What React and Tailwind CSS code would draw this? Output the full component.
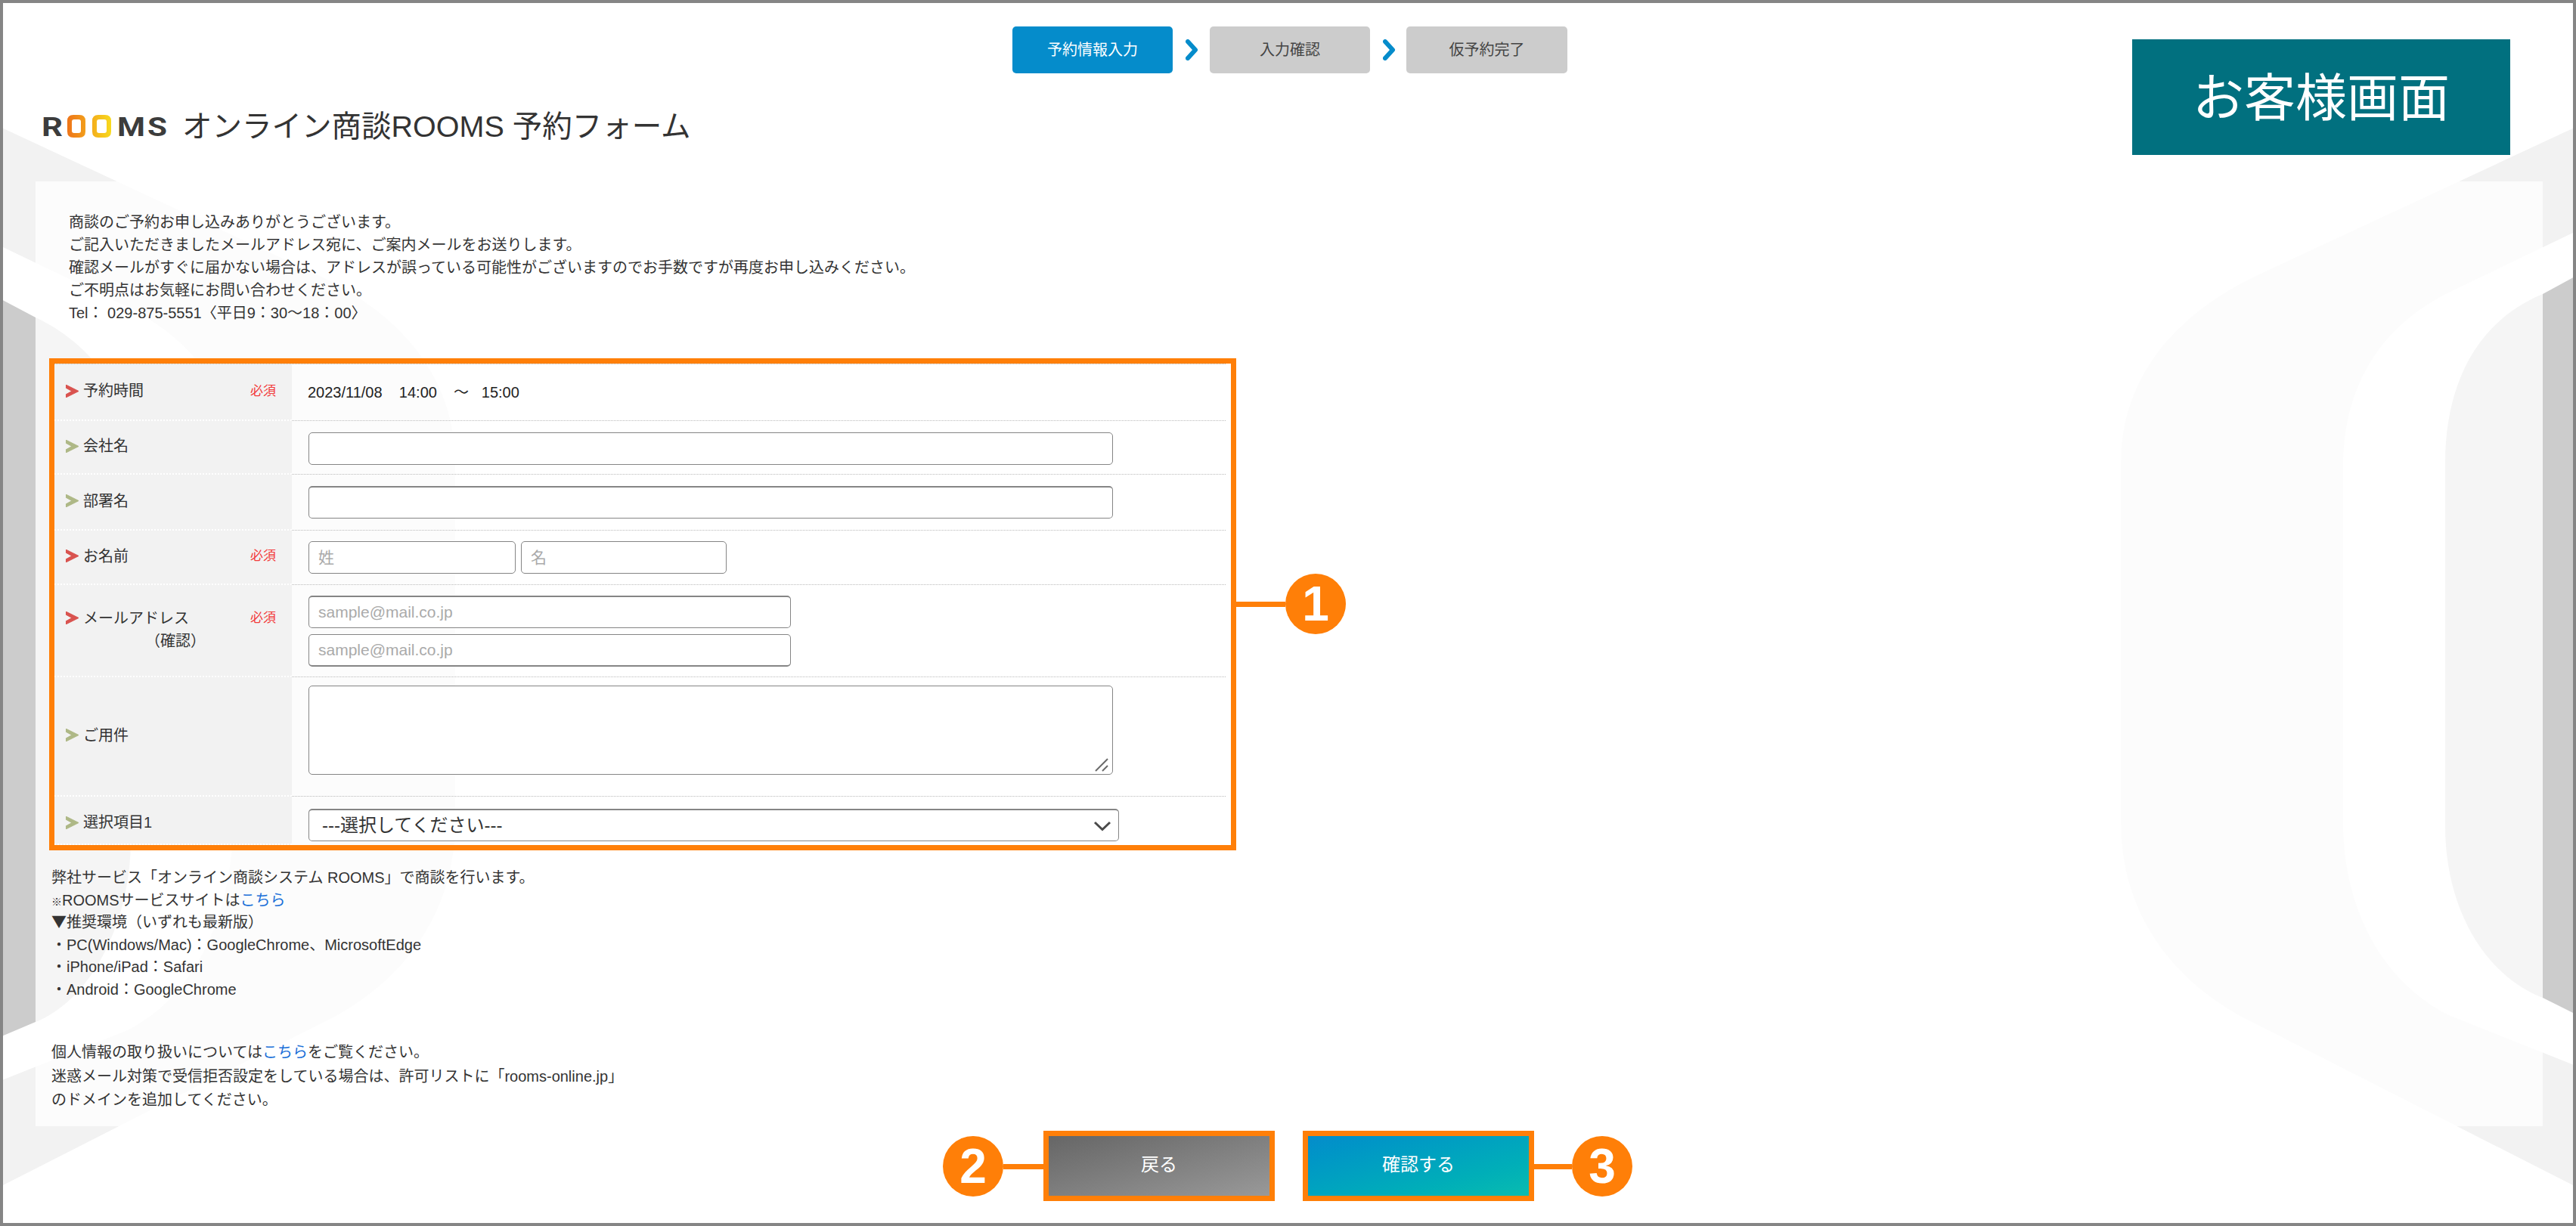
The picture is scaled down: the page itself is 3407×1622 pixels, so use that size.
import React from 'react';

const Chevron = ({ color }) => (
  <svg width="17" height="17" viewBox="0 0 17 17" className="shrink-0">
    <path d="M0 0 L17 8.5 L0 17 L0 13 L8 8.5 L0 4 Z" fill={color} stroke={color} strokeWidth="1" strokeLinejoin="round" />
  </svg>
);

const Required = () => <span className="ml-auto text-[17px] leading-none text-[#f23b3b]">必須</span>;

const Label = ({ children, required, className = '' }) => (
  <div className={`w-[314px] shrink-0 self-stretch bg-[#f2f2f2] border-b-2 border-dotted border-white flex flex-col justify-center pl-[15px] pr-[21px] pb-[3px] ${className}`}>
    <div className="flex items-center gap-[6px]">
      <Chevron color={required ? '#d9534f' : '#aeb886'} />
      <span>{children}</span>
      {required && <Required />}
    </div>
  </div>
);

const Field = ({ className = '', placeholder }) => (
  <input
    placeholder={placeholder}
    className={`h-[43px] border border-[#858585] rounded-[5px] bg-white px-[12px] text-[21px] placeholder:text-[#aaaaaa] ${className}`}
  />
);

const Callout = ({ n, className = '', line = 'w-[65px]', flip }) => (
  <div className={`absolute flex items-center ${flip ? 'flex-row-reverse' : ''} ${className}`}>
    <div className={`h-[7px] bg-[#ff7f08] ${line}`} />
    <div className="w-[80px] h-[80px] rounded-full bg-[#ff7f08] flex items-center justify-center text-white text-[64px] font-bold leading-none">
      {n}
    </div>
  </div>
);

const Background = () => (
  <svg className="absolute inset-0" width="3399" height="1614" viewBox="4 4 3399 1614">
    <path fill="#f2f2f2" d="M3407 168 L2990 362 C2865 420 2805 510 2805 612 L2805 1088 C2805 1200 2865 1300 2990 1358 L3407 1570 L3407 1410 L3241 1344 C3150 1300 3099 1200 3099 1088 L3099 617 C3099 510 3150 430 3241 386 L3407 306 Z" />
    <path fill="#cccccc" d="M3407 365 L3363 389 C3275 425 3234 510 3234 612 L3234 1093 C3234 1200 3285 1290 3363 1320 L3407 1342 Z" />
    {/* left side sits a little lower than the right one */}
    <g transform="translate(3407 0) scale(-1 1)">
      <path fill="#f2f2f2" d="M3407 168 L2990 362 C2865 420 2805 510 2805 612 L2805 1088 C2805 1200 2865 1300 2990 1358 L3407 1570 L3407 1430 L3241 1364 C3150 1320 3099 1210 3099 1088 L3099 617 C3099 520 3150 450 3241 405 L3407 325 Z" />
      <path fill="#cccccc" d="M3407 395 L3360 420 C3285 455 3234 525 3234 612 L3234 1110 C3234 1225 3290 1325 3360 1352 L3407 1372 Z" />
    </g>
  </svg>
);

const Logo = () => (
  <svg width="166" height="44" viewBox="0 -7 166 44" className="shrink-0 -my-[2px]">
    <defs>
      <linearGradient id="logo-o" gradientUnits="userSpaceOnUse" x1="34" y1="0" x2="92" y2="0">
        <stop offset="0" stopColor="#ee7419" />
        <stop offset="1" stopColor="#f8da1e" />
      </linearGradient>
    </defs>
    <g fill="#3c3c3c" fontFamily="Roboto, sans-serif" fontWeight="700" fontSize="35">
      <text x="0" y="28" textLength="28" lengthAdjust="spacingAndGlyphs">R</text>
      <text x="100" y="28" textLength="37" lengthAdjust="spacingAndGlyphs">M</text>
      <text x="140" y="28" textLength="26" lengthAdjust="spacingAndGlyphs">S</text>
    </g>
    <path
      fillRule="evenodd"
      fill="url(#logo-o)"
      d="M42 0 H50 Q58 0 58 8 V22 Q58 30 50 30 H42 Q34 30 34 22 V8 Q34 0 42 0 Z M43 6 Q40 6 40 9 V21 Q40 24 43 24 H49 Q52 24 52 21 V9 Q52 6 49 6 Z M75 0 H84 Q92 0 92 8 V22 Q92 30 84 30 H75 Q67 30 67 22 V8 Q67 0 75 0 Z M76 6 Q73 6 73 9 V21 Q73 24 76 24 H83 Q86 24 86 21 V9 Q86 6 83 6 Z"
    />
  </svg>
);

const App = () => {
  return (
    <div className="relative w-[3407px] h-[1622px] overflow-hidden border-4 border-[#858585] bg-white text-[20px] leading-[30px] text-[#333333] font-['Liberation_Sans','Noto_Sans_CJK_JP',sans-serif]">
      <Background />

      <div className="relative flex flex-col h-full">
        {/* header */}
        <div className="flex items-start h-[236px] shrink-0">
          <div className="pl-[51px]">
            <div className="flex items-center ml-[1284px] mt-[31px]">
              <div className="w-[212px] h-[62px] rounded-[5px] bg-[#058ccb] text-white flex items-center justify-center">予約情報入力</div>
              <svg width="18" height="28" viewBox="0 0 18 28" className="ml-[17px] mr-[14px]">
                <path d="M3 3 L13 14 L3 25" fill="none" stroke="#058ccb" strokeWidth="6" strokeLinecap="round" strokeLinejoin="round" />
              </svg>
              <div className="w-[212px] h-[62px] rounded-[5px] bg-[#cccccc] text-[#444444] flex items-center justify-center">入力確認</div>
              <svg width="18" height="28" viewBox="0 0 18 28" className="ml-[17px] mr-[13px]">
                <path d="M3 3 L13 14 L3 25" fill="none" stroke="#058ccb" strokeWidth="6" strokeLinecap="round" strokeLinejoin="round" />
              </svg>
              <div className="w-[213px] h-[62px] rounded-[5px] bg-[#cccccc] text-[#444444] flex items-center justify-center">仮予約完了</div>
            </div>
            <div className="flex items-center gap-[20px] mt-[50px]">
              <Logo />
              <h1 className="text-[39.5px] leading-[40px] text-[#333333]">オンライン商談ROOMS 予約フォーム</h1>
            </div>
          </div>
          <div className="ml-auto mr-[83px] mt-[48px] w-[500px] h-[153px] pt-[2px] bg-[#01707f] text-white text-[68px] flex items-center justify-center">
            お客様画面
          </div>
        </div>

        {/* panel */}
        <div className="ml-[43px] mr-[40px] h-[1250px] shrink-0 bg-white/80 pl-[18px] pt-[39px]">
          <div className="ml-[26px]">
            <p>商談のご予約お申し込みありがとうございます。</p>
            <p>ご記入いただきましたメールアドレス宛に、ご案内メールをお送りします。</p>
            <p>確認メールがすぐに届かない場合は、アドレスが誤っている可能性がございますのでお手数ですが再度お申し込みください。</p>
            <p>ご不明点はお気軽にお問い合わせください。</p>
            <p>Tel： 029-875-5551〈平日9：30〜18：00〉</p>
          </div>

          <div className="relative w-[1570px] mt-[45px]">
            <div className="h-[651px] border-[7px] border-[#ff7f08] overflow-hidden">
              <div className="w-[1549px]">
                <div className="flex items-center h-[76px] border-t border-dotted border-[#bbbbbb]">
                  <Label required>予約時間</Label>
                  <div className="flex-1 self-stretch border-b border-dotted border-[#bbbbbb] pl-[21px] flex items-center text-[#222222] whitespace-pre">
                    2023/11/08    14:00    ～   15:00
                  </div>
                </div>
                <div className="flex items-center h-[71px]">
                  <Label>会社名</Label>
                  <div className="flex-1 self-stretch border-b border-dotted border-[#bbbbbb] pl-[22px] pt-[3px] flex items-center">
                    <Field className="w-[1064px]" />
                  </div>
                </div>
                <div className="flex items-center h-[74px]">
                  <Label>部署名</Label>
                  <div className="flex-1 self-stretch border-b border-dotted border-[#bbbbbb] pl-[22px] flex items-center">
                    <Field className="w-[1064px] border-t-2" />
                  </div>
                </div>
                <div className="flex items-center h-[72px]">
                  <Label required>お名前</Label>
                  <div className="flex-1 self-stretch border-b border-dotted border-[#bbbbbb] pl-[22px] flex items-center gap-[7px]">
                    <Field className="w-[274px]" placeholder="姓" />
                    <Field className="w-[272px]" placeholder="名" />
                  </div>
                </div>
                <div className="flex items-center h-[122px]">
                  <div className="w-[314px] shrink-0 self-stretch bg-[#f2f2f2] border-b-2 border-dotted border-white flex flex-col justify-center pl-[15px] pr-[21px] pb-[3px]">
                    <div className="flex items-center gap-[6px]">
                      <Chevron color="#d9534f" />
                      <span>メールアドレス</span>
                      <Required />
                    </div>
                    <div className="ml-[105px]">（確認）</div>
                  </div>
                  <div className="flex-1 self-stretch border-b border-dotted border-[#bbbbbb] pl-[22px] flex flex-col justify-center gap-[8px]">
                    <Field className="w-[638px] border-t-2" placeholder="sample@mail.co.jp" />
                    <Field className="w-[638px] border-b-2" placeholder="sample@mail.co.jp" />
                  </div>
                </div>
                <div className="flex items-center h-[158px]">
                  <Label>ご用件</Label>
                  <div className="flex-1 self-stretch border-b border-dotted border-[#bbbbbb] pl-[22px] pt-[11px]">
                    <div className="relative w-[1064px] h-[118px]">
                      <textarea className="block w-full h-full resize-none border border-[#858585] rounded-[5px] bg-white" />
                      <svg width="20" height="20" viewBox="0 0 20 20" className="absolute right-[4px] bottom-[3px]">
                        <path d="M1 18 L17 2 M10 18 L17 11" fill="none" stroke="#6a6a6a" strokeWidth="2" />
                      </svg>
                    </div>
                  </div>
                </div>
                <div className="flex items-center h-[64px]">
                  <Label className="border-b-0 pt-[9px]">選択項目1</Label>
                  <div className="flex-1 self-stretch pl-[22px] pt-[16px]">
                    <div className="relative w-[1072px] h-[43px] border border-t-2 border-[#858585] rounded-[5px] bg-white pl-[17px] flex items-center text-[24px] text-[#333333]">
                      ---選択してください---
                      <svg width="24" height="14" viewBox="0 0 24 14" className="absolute right-[9px] top-[14px]">
                        <path d="M2 2 L12 11.5 L22 2" fill="none" stroke="#4a4a4a" strokeWidth="3" />
                      </svg>
                    </div>
                  </div>
                </div>
              </div>
            </div>
            <Callout n="1" className="left-full top-[285px]" />
          </div>

          <div className="ml-[3px] mt-[22px] leading-[29.5px]">
            <p>弊社サービス「オンライン商談システム ROOMS」で商談を行います。</p>
            <p><span className="text-[14px] leading-none">※</span>ROOMSサービスサイトは<a className="text-[#1a6fd8]">こちら</a></p>
            <p><span className="font-['Noto_Sans_CJK_JP',sans-serif] leading-none">▼</span>推奨環境（いずれも最新版）</p>
            <p>・PC(Windows/Mac)：GoogleChrome、MicrosoftEdge</p>
            <p>・iPhone/iPad：Safari</p>
            <p>・Android：GoogleChrome</p>
          </div>
          <div className="ml-[3px] mt-[53px] leading-[31.5px]">
            <p>個人情報の取り扱いについては<a className="text-[#1a6fd8]">こちら</a>をご覧ください。</p>
            <p>迷惑メール対策で受信拒否設定をしている場合は、許可リストに「rooms-online.jp」</p>
            <p>のドメインを追加してください。</p>
          </div>
        </div>

        {/* buttons */}
        <div className="flex justify-center gap-[37px] mt-[6px] pl-[2px] text-[24px] text-white">
          <div className="relative">
            <button className="block w-[306px] h-[93px] border-[7px] border-[#ff7f08] pb-[3px] bg-linear-to-br from-[#666666] to-[#999999]">戻る</button>
            <Callout n="2" flip line="w-[53px]" className="right-full top-[7px]" />
          </div>
          <div className="relative">
            <button className="block w-[306px] h-[93px] border-[7px] border-[#ff7f08] pb-[3px] bg-linear-to-br from-[#058ccb] to-[#0abcaf]">確認する</button>
            <Callout n="3" line="w-[50px]" className="left-full top-[7px]" />
          </div>
        </div>
      </div>
    </div>
  );
};

export default App;
